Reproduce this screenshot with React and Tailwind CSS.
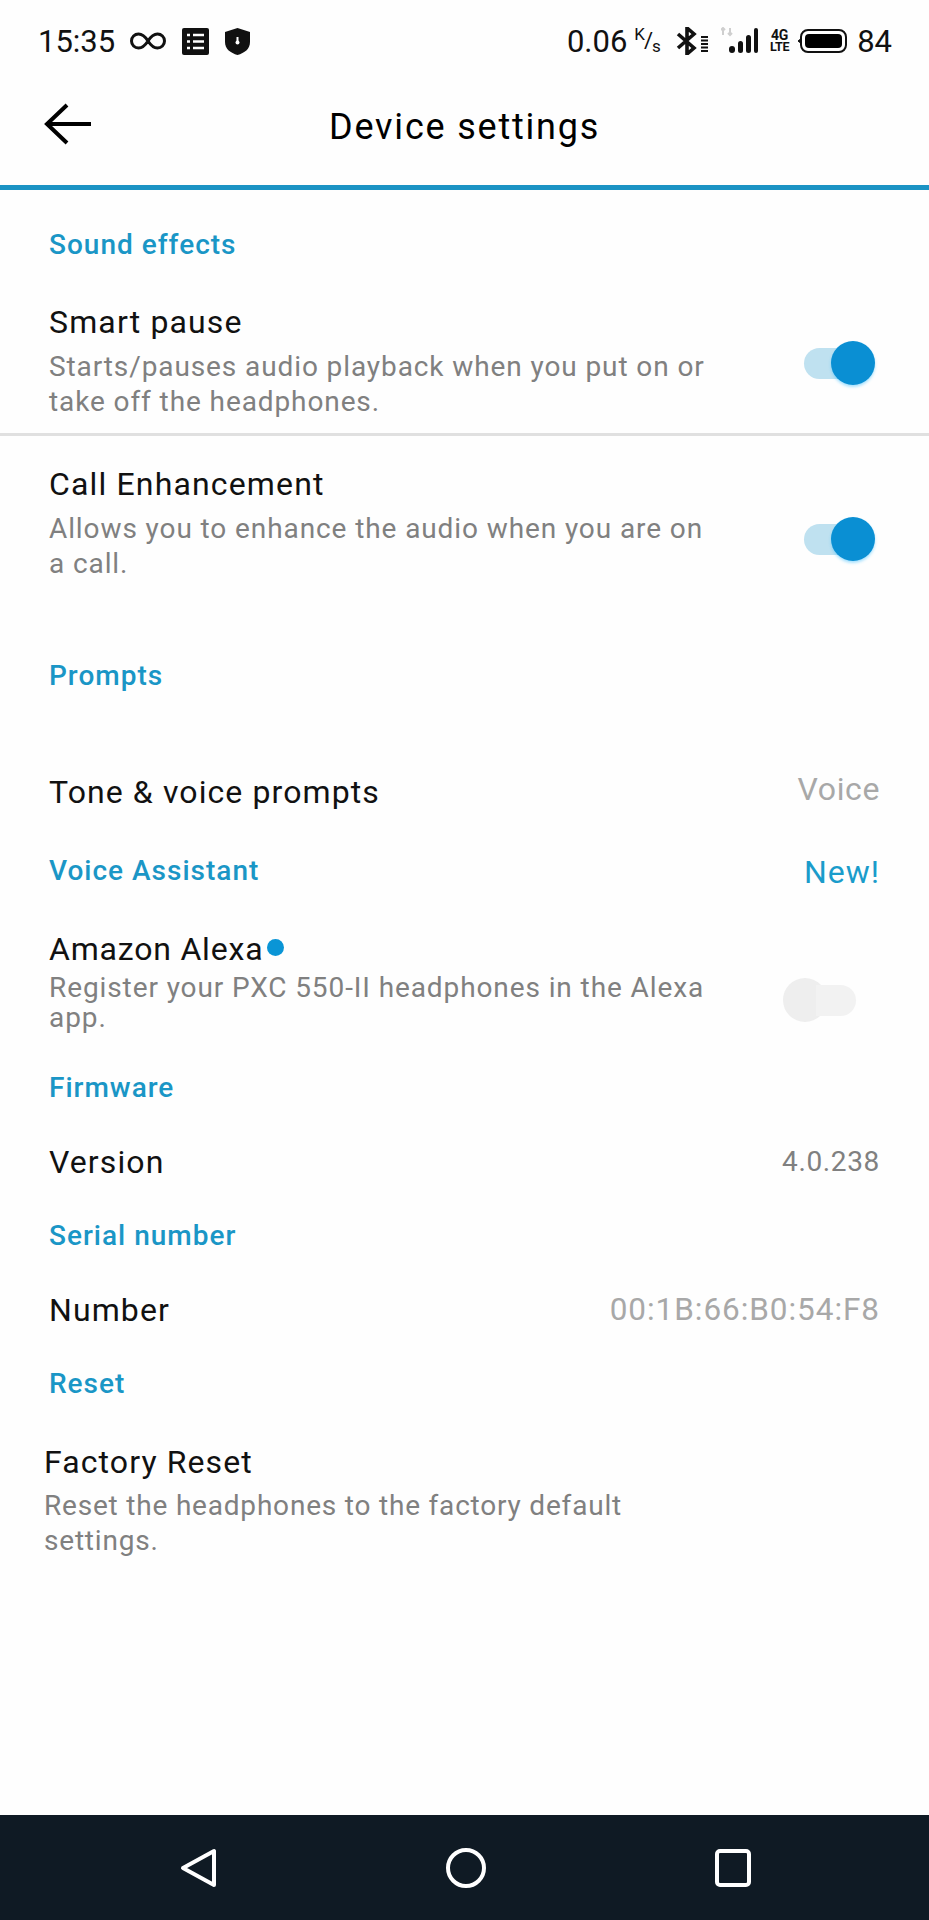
const font = { fontFamily: 'Roboto, sans-serif' };

function Toggle({ on, className }) {
  if (on) {
    return (
      <div className={`flex items-center w-[71px] h-[44px] shrink-0 ${className}`}>
        <div className="w-[43px] h-[31px] rounded-l-full bg-[#bfe1f0]" />
        <div className="w-[44px] h-[44px] -ml-[16px] shrink-0 rounded-full bg-[#0a8fd3] shadow-[0_2px_3px_rgba(60,190,255,0.45)]" />
      </div>
    );
  }
  return (
    <div className={`flex items-center w-[73px] h-[44px] shrink-0 ${className}`}>
      <div className="w-[44px] h-[44px] shrink-0 rounded-full bg-[#eeeeee]" />
      <div className="w-[40px] h-[31px] -ml-[11px] rounded-r-full bg-[#f2f2f2]" />
    </div>
  );
}

function SectionTitle({ children, right, className }) {
  return (
    <div className={`flex items-center justify-between h-[52px] px-[49px] text-[#1a96c6] text-[28px] font-medium tracking-[1px] ${className}`}>
      <span>{children}</span>
      {right && <span className="mt-[1px] text-[#1a9ccb] text-[32px] font-normal">{right}</span>}
    </div>
  );
}

function ValueRow({ label, value, valueClass, className }) {
  return (
    <div className={`flex items-center justify-between h-[96px] px-[49px] ${className}`}>
      <span className="text-[32px] tracking-[1.1px] text-[#111]">{label}</span>
      <span className={valueClass}>{value}</span>
    </div>
  );
}

function ToggleRow({ title, lines, toggle, className }) {
  return (
    <div className={`flex items-start justify-between pl-[49px] pr-[54px] ${className}`}>
      <div>
        <div className="text-[32px] leading-[36px] tracking-[1.15px] text-[#111]">{title}</div>
        <div className="mt-[9px] text-[28px] leading-[35px] tracking-[0.9px] text-[#808080]">
          {lines.map((l) => <div key={l}>{l}</div>)}
        </div>
      </div>
      {toggle}
    </div>
  );
}

function StatusBar() {
  return (
    <div className="flex items-center justify-between h-[82px] pl-[38px] pr-[37px] text-[#111]">
      <div className="flex items-center">
        <span className="text-[31px] leading-none">15:35</span>
        <svg className="ml-[15px]" width="36" height="20" viewBox="0 0 36 20" fill="none" stroke="#111" strokeWidth="3">
          <path d="M18 10C14.5 4.5 12 3 8.5 3a7 7 0 0 0 0 14c3.500 0 6-1.500 9.500-7s6-7 9.500-7a7 7 0 0 1 0 14c-3.500 0-6-1.500-9.500-7" />
        </svg>
        <svg className="ml-[16px]" width="27" height="27" viewBox="0 0 27 27">
          <rect width="27" height="27" rx="2" fill="#111" />
          <path d="M5 7h3M11 7h11M5 13.500h3M11 13.500h11M5 20h3M11 20h11" stroke="#fff" strokeWidth="2.400" />
        </svg>
        <svg className="ml-[16px]" width="25" height="27" viewBox="0 0 25 27">
          <path d="M12.500 0 25 4v10c0 7-5.500 11-12.500 13C5.500 25 0 21 0 14V4z" fill="#111" />
          <circle cx="12.500" cy="14.500" r="2" fill="#fff" />
          <path d="M11.500 9h2v5h-2z" fill="#fff" />
        </svg>
      </div>
      <div className="flex items-center">
        <span className="text-[31px] leading-none">0.06</span>
        <span className="ml-[7px] text-[22px] leading-none tracking-[-1px]">
          <sup className="text-[17px]">K</sup>/<sub className="text-[17px]">s</sub>
        </span>
        <svg className="ml-[16px]" width="32" height="28" viewBox="0 0 32 28" fill="none">
          <path d="M2 7l16 14-7 6V1l7 6L2 21" stroke="#111" strokeWidth="3.600" />
          <path d="M25 10h7M25 13.500h7M25 17h7M25 20.500h7M25 24h7" stroke="#111" strokeWidth="2" />
        </svg>
        <svg className="ml-[13px]" width="37" height="28" viewBox="0 0 37 28">
          <path d="M2 8V1M0 3l2-2 2 2M9 1v7M7 6l2 2 2-2" stroke="#cfcfcf" strokeWidth="2" fill="none" />
          <rect x="8" y="19" width="6" height="7" rx="3" fill="#111" />
          <rect x="17" y="14" width="5" height="12" rx="2.500" fill="#111" />
          <rect x="25" y="8" width="5" height="18" rx="2.500" fill="#111" />
          <rect x="33" y="1" width="4" height="25" rx="2" fill="#111" />
        </svg>
        <div className="ml-[12px] flex flex-col items-center text-[12.5px] leading-[12.500px] font-bold tracking-[-0.3px]">
          <span className="text-[14px]">4G</span>
          <span>LTE</span>
        </div>
        <svg className="ml-[8px]" width="50" height="24" viewBox="0 0 50 24">
          <path d="M3 10.500 1 12l2 1.500z" fill="#111" stroke="#111" />
          <rect x="4" y="1" width="45" height="22" rx="7" fill="none" stroke="#111" strokeWidth="2" />
          <rect x="8" y="5" width="37" height="14" rx="4" fill="#000" />
        </svg>
        <span className="ml-[10px] text-[31px] leading-none">84</span>
      </div>
    </div>
  );
}

function NavBar() {
  return (
    <div className="flex items-center justify-between h-[105px] pl-[180px] pr-[178px] bg-[#0f1a24]">
      <svg width="38" height="40" viewBox="0 0 38 40" fill="none" stroke="#fff" strokeWidth="4" strokeLinejoin="round">
        <path d="M34 3v34L3 20z" />
      </svg>
      <svg className="-ml-[2px]" width="42" height="42" viewBox="0 0 42 42" fill="none" stroke="#fff" strokeWidth="4">
        <circle cx="21" cy="21" r="18" />
      </svg>
      <svg width="36" height="38" viewBox="0 0 36 38" fill="none" stroke="#fff" strokeWidth="4">
        <rect x="2" y="2" width="32" height="34" rx="3" />
      </svg>
    </div>
  );
}

export default function App() {
  return (
    <div className="flex flex-col w-[929px] h-[1920px] bg-[#fefefe]" style={font}>
      <StatusBar />
      {/* toolbar */}
      <div className="flex items-center h-[103px] pl-[44px] pb-[20px]">
        <svg width="48" height="42" viewBox="0 0 48 42" fill="none" stroke="#000" strokeWidth="4">
          <path d="M47 21H3M23 2 3 21l20 19" />
        </svg>
        <div className="ml-[237px] mt-[6px] text-[36px] font-[450] tracking-[1.8px] text-black">Device settings</div>
      </div>
      <div className="h-[5px] bg-[#1b93c4]" />

      <SectionTitle className="mt-[29px] mb-[27px]">Sound effects</SectionTitle>
      <ToggleRow
        className="pt-[6px] pb-[14px]"
        title="Smart pause"
        lines={['Starts/pauses audio playback when you put on or', 'take off the headphones.']}
        toggle={<Toggle on className="mt-[37px]" />}
      />
      <div className="h-[3px] bg-[#e0e0e0]" />
      <ToggleRow
        className="pt-[30px]"
        title="Call Enhancement"
        lines={['Allows you to enhance the audio when you are on', 'a call.']}
        toggle={<Toggle on className="mt-[51px]" />}
      />
      <SectionTitle className="mt-[69px]">Prompts</SectionTitle>
      <ValueRow
        className="mt-[42px]"
        label="Tone & voice prompts"
        value="Voice"
        valueClass="text-[32px] tracking-[0.6px] text-[#a8a8a8] -mt-[6px]"
      />
      <SectionTitle className="mt-[5px]" right="New!">Voice Assistant</SectionTitle>
      <div className="flex items-center justify-between pl-[49px] pr-[73px] pt-[34px]">
        <div>
          <div className="flex text-[32px] leading-[36px] tracking-[0.8px] text-[#111]">
            Amazon Alexa
            <span className="ml-[4px] mt-[8px] w-[17px] h-[17px] rounded-full bg-[#0a95d6]" />
          </div>
          <div className="mt-[6px] text-[28px] leading-[30px] tracking-[0.9px] text-[#808080]">
            <div>Register your PXC 550-II headphones in the Alexa</div>
            <div>app.</div>
          </div>
        </div>
        <Toggle className="mt-[36px]" />
      </div>
      <SectionTitle className="mt-[29px]">Firmware</SectionTitle>
      <ValueRow
        label="Version"
        value="4.0.238"
        valueClass="text-[28px] tracking-[0.65px] text-[#808080]"
      />
      <SectionTitle>Serial number</SectionTitle>
      <ValueRow
        label="Number"
        value="00:1B:66:B0:54:F8"
        valueClass="text-[31.5px] tracking-[0.95px] text-[#a8a8a8]"
      />
      <SectionTitle>Reset</SectionTitle>
      <div className="pl-[44px] pt-[34px]">
        <div className="text-[32px] leading-[36px] tracking-[1.1px] text-[#111]">Factory Reset</div>
        <div className="mt-[8px] text-[28px] leading-[35px] tracking-[0.8px] text-[#808080]">
          <div>Reset the headphones to the factory default</div>
          <div>settings.</div>
        </div>
      </div>
      <div className="flex-1" />
      <NavBar />
    </div>
  );
}
